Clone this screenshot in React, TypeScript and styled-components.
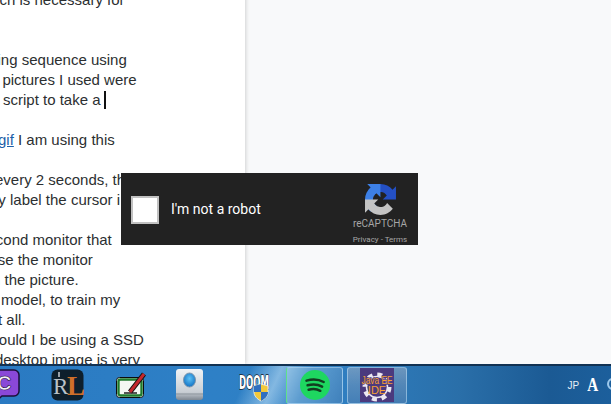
import React from "react";
import styled, { createGlobalStyle } from "styled-components";

const Global = createGlobalStyle`
  html, body { margin: 0; padding: 0; overflow: hidden; background: #f8f9fa; }
`;

const Page = styled.div`
  position: relative;
  width: 611px;
  height: 404px;
  overflow: hidden;
  display: flex;
  flex-direction: column;
`;

const Content = styled.div`
  display: flex;
  height: 364px;
  flex: none;
  overflow: hidden;
`;

const Column = styled.main`
  width: 245px;
  flex: none;
  background: #fff;
  overflow: hidden;
  box-shadow: 1px 0 4px rgba(0, 0, 0, 0.16);
  z-index: 1;
  margin-top: -10px;
  height: 374px;
`;

const Side = styled.aside`
  flex: 1;
  background: #f8f9fa;
`;

const Line = styled.div<{ $shift?: number }>`
  height: 20px;
  margin-left: ${(p) => p.$shift ?? 0}px;
  font: 15px/20px "Liberation Sans", Arial, sans-serif;
  color: #2c2f31;
  white-space: nowrap;
`;

const Gap = styled.div`
  height: 20px;
`;

const GifLink = styled.a`
  color: #1c5fa8;
  text-decoration: underline;
`;

const Caret = styled.span`
  display: inline-block;
  width: 2px;
  height: 18px;
  margin-left: 3px;
  vertical-align: -4px;
  background: #111;
`;

const Captcha = styled.section`
  position: absolute;
  left: 121px;
  top: 173px;
  z-index: 2;
  width: 297px;
  height: 72px;
  box-sizing: border-box;
  padding: 0 10px;
  background: #222;
  display: flex;
  align-items: center;
`;

const CheckBox = styled.div`
  width: 28px;
  height: 28px;
  box-sizing: border-box;
  flex: none;
  background: #fff;
  border: 2px solid #c1c1c1;
  margin-top: 1px;
`;

const RobotLabel = styled.span`
  margin-left: 12px;
  flex: 1;
  font: 14px "Roboto", Arial, sans-serif;
  color: #fff;
`;

const Brand = styled.div`
  width: 72px;
  margin-right: -8px;
  margin-top: 10px;
  display: flex;
  flex-direction: column;
  align-items: center;
  color: #a6a6a6;
  font-family: "Roboto", Arial, sans-serif;
`;

const BrandName = styled.div`
  font-size: 10px;
  line-height: 12px;
  margin-top: 3px;
`;

const BrandLinks = styled.div`
  font-size: 8px;
  line-height: 10px;
  margin-top: 5px;
`;

const Taskbar = styled.footer`
  flex: 1;
  display: flex;
  align-items: center;
  box-sizing: border-box;
  z-index: 3;
  border-top: 2px solid #123252;
  background:
    linear-gradient(115deg, rgba(255,255,255,0) 40%, rgba(215,240,255,.5) 45%, rgba(255,255,255,0) 50%),
    linear-gradient(90deg, #2a7ac2 0%, #2e80c6 35%, #2f7fc2 55%, #2a6fa9 75%, #1b5a94 90%, #1c5f9c 100%);
  position: relative;
`;

const Slot = styled.div<{ $w: number }>`
  width: ${(p) => p.$w}px;
  flex: none;
  height: 38px;
  display: flex;
  align-items: center;
  justify-content: center;
`;

const TaskButton = styled.div<{ $active?: boolean; $w: number }>`
  width: ${(p) => p.$w}px;
  flex: none;
  height: 37px;
  box-sizing: border-box;
  display: flex;
  align-items: center;
  justify-content: center;
  border-radius: 3px;
  border: 1px solid rgba(190, 225, 250, 0.55);
  border-left-color: ${(p) => (p.$active ? "#5fe08a" : "rgba(190,225,250,.55)")};
  background: ${(p) =>
    p.$active
      ? "linear-gradient(115deg, rgba(170,210,235,.5) 0%, rgba(120,170,210,.5) 60%, rgba(80,130,180,.5) 100%)"
      : "linear-gradient(180deg, rgba(150,170,195,.6) 0%, rgba(120,150,185,.5) 50%, rgba(90,130,175,.5) 100%)"};
`;

const Tray = styled.div`
  margin-left: auto;
  display: flex;
  align-items: center;
  gap: 7px;
  color: #e6eef6;
`;

const Lang = styled.span`
  font: 10px "Liberation Sans", Arial, sans-serif;
`;

const Ime = styled.span`
  font: bold 19px "Liberation Serif", serif;
  color: #fff;
  transform: scaleX(0.8);
`;

const TrayArc = styled.svg`
  margin-right: -8px;
  margin-bottom: 2px;
`;

const RecaptchaLogo = () => (
  <svg width="31" height="31" viewBox="0 0 64 64">
    <path fill="#2450c4" d="M64 31.955l-.033-1.37V4.687l-7.16 7.16C50.948 4.674 42.033.093 32.05.093c-10.4 0-19.622 4.96-25.458 12.64l11.736 11.86a15.55 15.55 0 0 1 4.754-5.334c2.05-1.6 4.952-2.906 8.968-2.906.485 0 .86.057 1.135.163 4.976.393 9.288 3.14 11.828 7.124l-8.307 8.307 32.274.008" />
    <path fill="#3d80e6" d="M31.862.002l-1.37.033H4.594l7.16 7.16C4.58 13.054 0 21.97 0 31.953c0 10.4 4.96 19.622 12.64 25.458L24.5 45.675a15.55 15.55 0 0 1-5.334-4.754c-1.6-2.05-2.906-4.952-2.906-8.968 0-.485.057-.86.163-1.135.393-4.976 3.14-9.288 7.124-11.828l8.307 8.307L31.862.002" />
    <path fill="#c4c4c4" d="M.002 31.953l.033 1.37v25.898l7.16-7.16c5.86 7.173 14.775 11.754 24.76 11.754 10.4 0 19.622-4.96 25.458-12.64l-11.736-11.86a15.55 15.55 0 0 1-4.754 5.334c-2.05 1.6-4.952 2.906-8.968 2.906-.485 0-.86-.057-1.135-.163-4.976-.393-9.288-3.14-11.828-7.124l8.307-8.307-32.274-.008" />
  </svg>
);

const BubbleIcon = () => (
  <svg width="20" height="34" viewBox="0 0 20 34">
    <path d="M-8 2h22a5 5 0 0 1 5 5v16a5 5 0 0 1-5 5H2l-6 5v-5h-4z" fill="#8a48d8" stroke="#1c0f3a" strokeWidth="1.5" />
    <text x="-3" y="22" fontFamily="Liberation Sans" fontWeight="700" fontSize="20" fill="#f4eefc" stroke="#1c0f3a" strokeWidth="0.6">C</text>
  </svg>
);

const RlIcon = () => (
  <svg width="33" height="32" viewBox="0 0 33 32">
    <rect x="0.5" y="0.5" width="32" height="31" rx="6" fill="#0e1f2c" />
    <text x="2" y="25" fontFamily="Liberation Serif" fontSize="23" fill="#b9c2c8">R</text>
    <text x="16" y="26" fontFamily="Liberation Serif" fontWeight="700" fontSize="27" fill="#cf6f2a">L</text>
    <path d="M8 3v5" stroke="#c9ced2" strokeWidth="1.5" />
  </svg>
);

const EditIcon = () => (
  <svg width="32" height="28" viewBox="0 0 32 28">
    <rect x="1.5" y="6.5" width="27" height="20" rx="3" fill="#f4f7f2" stroke="#0c0c0c" strokeWidth="1" />
    <rect x="3.5" y="8.5" width="23" height="16" rx="2" fill="none" stroke="#1f7a2c" strokeWidth="2.4" />
    <path d="M9 22h13" stroke="#111" strokeWidth="1.4" />
    <path d="M15 21L29 3" stroke="#101010" strokeWidth="5" />
    <path d="M15 21L29 3" stroke="#c4272d" strokeWidth="3" />
  </svg>
);

const PersonIcon = () => (
  <svg width="30" height="34" viewBox="0 0 30 34">
    <defs>
      <linearGradient id="plate" x1="0" y1="0" x2="0" y2="1">
        <stop offset="0" stopColor="#f1f3f5" />
        <stop offset="0.75" stopColor="#c8ced4" />
        <stop offset="1" stopColor="#7e8791" />
      </linearGradient>
      <radialGradient id="orb" cx="0.5" cy="0.4" r="0.6">
        <stop offset="0" stopColor="#5ec2f5" />
        <stop offset="1" stopColor="#1272c4" />
      </radialGradient>
    </defs>
    <rect x="1" y="1" width="27" height="31" rx="3" fill="url(#plate)" />
    <ellipse cx="14.5" cy="12" rx="6" ry="7" fill="url(#orb)" stroke="#7f97ad" />
    <path d="M1 26h27" stroke="#8d959d" strokeWidth="1" />
  </svg>
);

const DoomIcon = () => (
  <svg width="36" height="34" viewBox="0 0 36 34">
    <text x="2" y="21" fontFamily="DejaVu Sans" fontWeight="700" fontSize="20" textLength="30" lengthAdjust="spacingAndGlyphs" fill="#ffffff" stroke="#14181e" strokeWidth="1.6" paintOrder="stroke">DOOM</text>
    <path d="M17 18l7-2 7 2v6c0 4-3 7-7 9-4-2-7-5-7-9z" fill="#f2c83a" stroke="#eef2f6" strokeWidth="0.8" />
    <path d="M17 18l7-2v8h-7zM24 24h7c0 4-3 7-7 9z" fill="#2f6fc0" />
  </svg>
);

const SpotifyIcon = () => (
  <svg width="30" height="30" viewBox="0 0 30 30">
    <circle cx="15" cy="15" r="15" fill="#1ed760" />
    <path d="M6.5 10.6c6-1.7 12.4-1.2 17.2 1.4M7.6 15.3c5-1.4 10.5-.9 14.5 1.3M8.6 19.7c4-1 8.5-.7 11.7 1.100" fill="none" stroke="#123d20" strokeWidth="2.5" strokeLinecap="round" />
  </svg>
);

const JavaIcon = () => (
  <svg width="34" height="34" viewBox="0 0 34 34">
    <rect width="34" height="34" fill="#4b3a7e" />
    <circle cx="17" cy="19" r="12.5" fill="none" stroke="#ece8f2" strokeWidth="4" strokeDasharray="5 4.8" />
    <circle cx="17" cy="19" r="10.5" fill="#4b3a7e" stroke="#ece8f2" strokeWidth="1.5" />
    <text x="17" y="16" textAnchor="middle" fontFamily="Liberation Sans" fontSize="11" textLength="31" lengthAdjust="spacingAndGlyphs" fill="#f7a033" stroke="#4b3a7e" strokeWidth="1.5" paintOrder="stroke">Java EE</text>
    <text x="17" y="26" textAnchor="middle" fontFamily="Liberation Sans" fontSize="11" fill="#f7a033">IDE</text>
  </svg>
);

export default function App() {
  return (
    <Page>
      <Global />
      <Content>
        <Column>
          <Line $shift={-23}>which is necessary for</Line>
          <Gap />
          <Gap />
          <Line $shift={-40}>mapping sequence using</Line>
          <Line $shift={-10}>≤ pictures I used were</Line>
          <Line $shift={3}>script to take a<Caret /></Line>
          <Gap />
          <Line $shift={-2}><GifLink>gif</GifLink> I am using this</Line>
          <Gap />
          <Line $shift={-5}>every 2 seconds, th</Line>
          <Line $shift={-5}>ly label the cursor i</Line>
          <Gap />
          <Line $shift={-20}>second monitor that</Line>
          <Line $shift={-19}>ause the monitor</Line>
          <Line $shift={-8}>n the picture.</Line>
          <Line $shift={1}>model, to train my</Line>
          <Line $shift={-2}>t all.</Line>
          <Line $shift={-17}>should I be using a SSD</Line>
          <Line $shift={-5}>desktop image is very</Line>
        </Column>
        <Side />
      </Content>
      <Captcha>
        <CheckBox />
        <RobotLabel>I'm not a robot</RobotLabel>
        <Brand>
          <RecaptchaLogo />
          <BrandName>reCAPTCHA</BrandName>
          <BrandLinks>Privacy - Terms</BrandLinks>
        </Brand>
      </Captcha>
      <Taskbar>
        <Slot $w={20}><BubbleIcon /></Slot>
        <Slot $w={31} />
        <Slot $w={33}><RlIcon /></Slot>
        <Slot $w={31} />
        <Slot $w={32}><EditIcon /></Slot>
        <Slot $w={28} />
        <Slot $w={30}><PersonIcon /></Slot>
        <Slot $w={32} />
        <Slot $w={36}><DoomIcon /></Slot>
        <Slot $w={13} />
        <TaskButton $active $w={57}><SpotifyIcon /></TaskButton>
        <Slot $w={4} />
        <TaskButton $w={60}><JavaIcon /></TaskButton>
        <Tray>
          <Lang>JP</Lang>
          <Ime>A</Ime>
          <TrayArc width="12" height="12" viewBox="0 0 12 12">
            <circle cx="6" cy="6" r="5" fill="none" stroke="#9cc8ec" strokeWidth="2" />
          </TrayArc>
        </Tray>
      </Taskbar>
    </Page>
  );
}
